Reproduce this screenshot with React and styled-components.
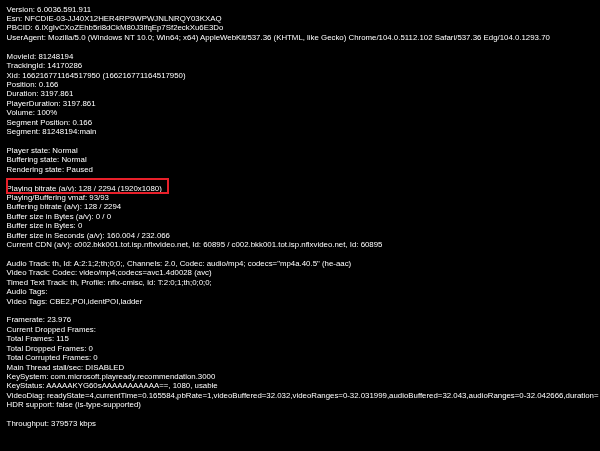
import styled, { createGlobalStyle } from "styled-components";

const GlobalStyle = createGlobalStyle`
  html, body {
    margin: 0;
    padding: 0;
    background: #000;
  }
`;

const Panel = styled.div`
  position: relative;
  width: 600px;
  height: 451px;
  box-sizing: border-box;
  padding: 4.6px 0 0 6.6px;
  overflow: hidden;
  background: #000;
  color: #fff;
  font-family: "Liberation Sans", Arial, sans-serif;
  font-size: 7.85px;
  line-height: 9.42px;
`;

const Group = styled.div`
  margin-bottom: 9.42px;
  filter: blur(0.2px);
`;

const Line = styled.div`
  white-space: nowrap;
`;

const Highlight = styled.div`
  position: absolute;
  left: 6px;
  top: 178px;
  width: 163px;
  height: 16px;
  box-sizing: border-box;
  border: 2px solid #e8202a;
`;

const groups = [
  [
    "Version: 6.0036.591.911",
    "Esn: NFCDIE-03-JJ40X12HER4RP9WPWJNLNRQY03KXAQ",
    "PBCID: 6.lXgIvCXoZEhb5ri8dCkM80J3lfqEp7Sf2eckXu6E3Do",
    "UserAgent: Mozilla/5.0 (Windows NT 10.0; Win64; x64) AppleWebKit/537.36 (KHTML, like Gecko) Chrome/104.0.5112.102 Safari/537.36 Edg/104.0.1293.70",
  ],
  [
    "MovieId: 81248194",
    "TrackingId: 14170286",
    "Xid: 166216771164517950 (166216771164517950)",
    "Position: 0.166",
    "Duration: 3197.861",
    "PlayerDuration: 3197.861",
    "Volume: 100%",
    "Segment Position: 0.166",
    "Segment: 81248194:main",
  ],
  ["Player state: Normal", "Buffering state: Normal", "Rendering state: Paused"],
  [
    "Playing bitrate (a/v): 128 / 2294 (1920x1080)",
    "Playing/Buffering vmaf: 93/93",
    "Buffering bitrate (a/v): 128 / 2294",
    "Buffer size in Bytes (a/v): 0 / 0",
    "Buffer size in Bytes: 0",
    "Buffer size in Seconds (a/v): 160.004 / 232.066",
    "Current CDN (a/v): c002.bkk001.tot.isp.nflxvideo.net, Id: 60895 / c002.bkk001.tot.isp.nflxvideo.net, Id: 60895",
  ],
  [
    'Audio Track: th, Id: A:2:1;2;th;0;0;, Channels: 2.0, Codec: audio/mp4; codecs="mp4a.40.5" (he-aac)',
    "Video Track: Codec: video/mp4;codecs=avc1.4d0028 (avc)",
    "Timed Text Track: th, Profile: nflx-cmisc, Id: T:2:0;1;th;0;0;0;",
    "Audio Tags:",
    "Video Tags: CBE2,POI,identPOI,ladder",
  ],
  [
    "Framerate: 23.976",
    "Current Dropped Frames:",
    "Total Frames: 115",
    "Total Dropped Frames: 0",
    "Total Corrupted Frames: 0",
    "Main Thread stall/sec: DISABLED",
    "KeySystem: com.microsoft.playready.recommendation.3000",
    "KeyStatus: AAAAAKYG60sAAAAAAAAAAA==, 1080, usable",
    "VideoDiag: readyState=4,currentTime=0.165584,pbRate=1,videoBuffered=32.032,videoRanges=0-32.031999,audioBuffered=32.043,audioRanges=0-32.042666,duration=",
    "HDR support: false (is-type-supported)",
  ],
  ["Throughput: 379573 kbps"],
];

export default function App() {
  return (
    <>
      <GlobalStyle />
      <Panel>
        {groups.map((lines) => (
          <Group key={lines[0]}>
            {lines.map((line) => (
              <Line key={line}>{line}</Line>
            ))}
          </Group>
        ))}
        <Highlight />
      </Panel>
    </>
  );
}
